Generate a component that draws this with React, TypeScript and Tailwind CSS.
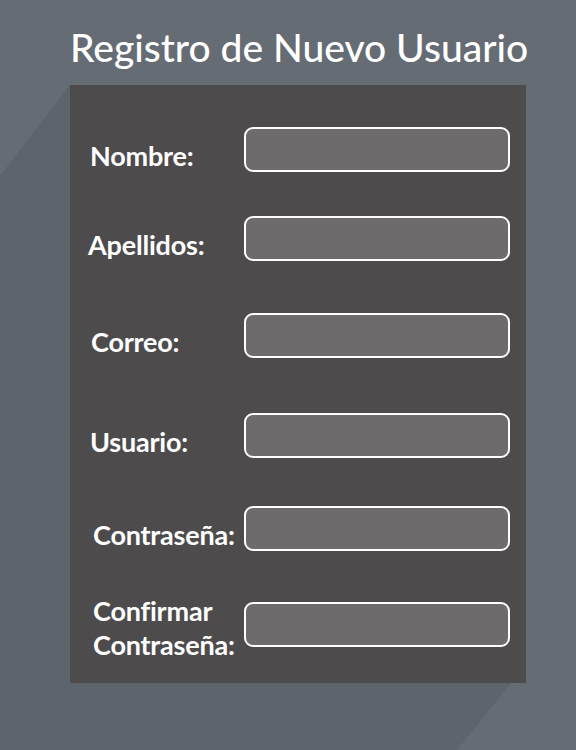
const fields = [
  { label: ["Nombre:"], mt: "mt-[42px]", pl: "pl-[20px] pt-3" },
  { label: ["Apellidos:"], mt: "mt-[44px]", pl: "pl-[18px] pt-3" },
  { label: ["Correo:"], mt: "mt-[52px]", pl: "pl-[21px] pt-3" },
  { label: ["Usuario:"], mt: "mt-[55px]", pl: "pl-[20px] pt-3" },
  { label: ["Contraseña:"], mt: "mt-[48px]", pl: "pl-[23px] pt-3", type: "password" },
  { label: ["Confirmar", "Contraseña:"], mt: "mt-[51px]", pl: "pl-[23px] pt-[6px]", type: "password" },
];

export default function App() {
  return (
    <div className="relative w-[576px] h-[750px] overflow-hidden bg-[#656c74] font-['Lato',sans-serif] text-white">
      {/* long shadow behind the card */}
      <svg className="absolute inset-0 pointer-events-none" width="576" height="750" viewBox="0 0 576 750">
        <polygon points="70,85 511,683 457,750 0,750 0,176" fill="#5d646b" />
      </svg>

      <div className="relative flex flex-col items-start pl-[70px]">
        <h1 className="w-[456px] mt-[24px] text-center text-[39px] leading-[46px] font-medium whitespace-nowrap">
          Registro de Nuevo Usuario
        </h1>

        <form className="mt-[15px] flex w-[456px] h-[598px] flex-col bg-[#4d4b4c]">
          {fields.map((f, i) => (
            <div key={i} className={`flex h-[45px] items-center ${f.mt}`}>
              <label className={`w-[174px] shrink-0 ${f.pl} text-[27px] font-bold leading-[34px] tracking-[-0.2px] whitespace-nowrap`}>
                {f.label.map((l, j) => (
                  <span key={j} className="block">
                    {l}
                  </span>
                ))}
              </label>
              <input
                type={f.type ?? "text"}
                className="h-[45px] w-[266px] rounded-[9px] border-2 border-white bg-[#6d6b6c] outline-none"
              />
            </div>
          ))}
        </form>
      </div>
    </div>
  );
}
